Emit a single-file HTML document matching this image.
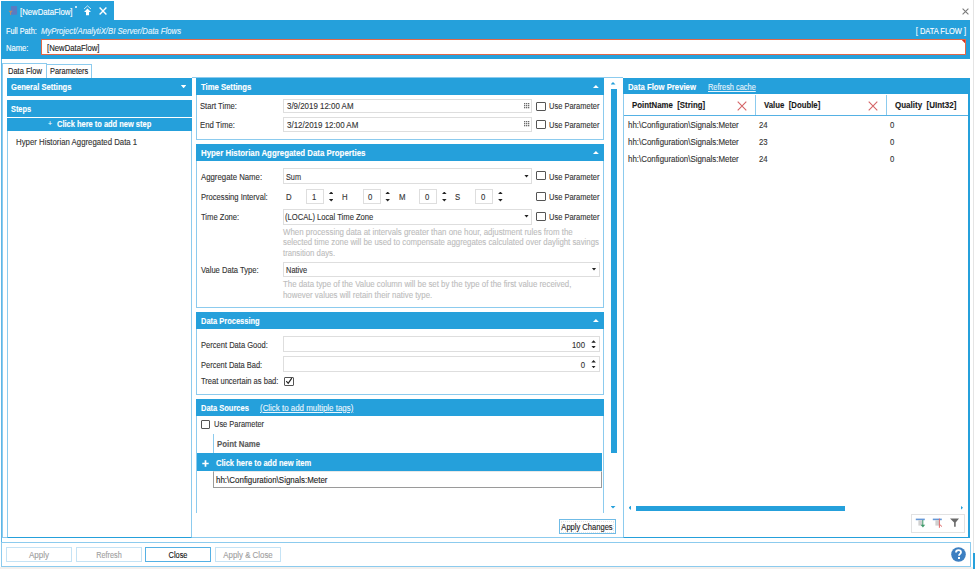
<!DOCTYPE html>
<html><head><meta charset="utf-8">
<style>
html,body{margin:0;padding:0;}
body{width:975px;height:569px;overflow:hidden;position:relative;background:#fff;font-family:"Liberation Sans",sans-serif;}
.a{position:absolute;box-sizing:border-box;}
.t{position:absolute;white-space:pre;font-size:8.5px;line-height:10px;color:#333;-webkit-text-stroke:0.12px currentColor;}
</style></head><body>
<div class="a" style="left:1px;top:1px;width:113px;height:20px;background:#25a0db"></div>
<div class="a" style="left:1px;top:20px;width:969px;height:39px;background:#25a0db"></div>
<svg class="a" style="left:8px;top:5px" width="11" height="11" viewBox="0 0 11 11"><rect x="2.9" y="1.1" width="6.2" height="8.6" rx="0.8" fill="#6673bd" opacity=".8"/><path d="M0.4 5.7H4.8L3.1 7.8V10H2.1V7.8Z" fill="#c8875a" opacity=".85"/></svg>
<div class="t" style="left:19.7px;top:6.50px;color:#fff;transform:scaleX(0.9108159392789373);transform-origin:0 0;">[NewDataFlow]</div>
<div class="a" style="left:75px;top:5.5px;width:2.2px;height:2.2px;border-radius:50%;background:#fff;"></div>
<svg class="a" style="left:83px;top:5px" width="9" height="11" viewBox="0 0 9 11"><path d="M1 4L4.5 0.9L8 4" stroke="#fff" stroke-width="0.9" fill="none" opacity="0.85"/><path d="M4.5 3.4L8 7H6V10.2H3V7H1Z" fill="#fff"/></svg>
<svg class="a" style="left:99px;top:6.5px" width="8" height="8" viewBox="0 0 8 8"><path d="M0.6 0.6L7.4 7.4M7.4 0.6L0.6 7.4" stroke="#fff" stroke-width="1.4"/></svg>
<svg class="a" style="left:962px;top:7.5px" width="7" height="7" viewBox="0 0 7 7"><path d="M0.6 0.6L6.4 6.4M6.4 0.6L0.6 6.4" stroke="#7a7a7a" stroke-width="1.1"/></svg>
<div class="a" style="left:973px;top:0px;width:1px;height:569px;background:#e4e4e4"></div>
<div class="a" style="left:973px;top:553px;width:2px;height:16px;background:#25a0db"></div>
<div class="a" style="left:0px;top:567px;width:973px;height:2px;background:#f2f0ee"></div>
<div class="t" style="left:6.2px;top:25.70px;color:#fff;transform:scaleX(0.8550043516100957);transform-origin:0 0;">Full Path:</div>
<div class="t" style="left:41.4px;top:25.70px;color:#e6f4fc;font-style:italic;transform:scaleX(0.9090909090909091);transform-origin:0 0;">MyProject/AnalytiX/BI Server/Data Flows</div>
<div class="t" style="left:966px;top:25.70px;color:#fff;transform:translateX(-100%) scaleX(0.8758996728462378);transform-origin:100% 0;">[ DATA FLOW ]</div>
<div class="t" style="left:6.2px;top:43.00px;color:#fff;transform:scaleX(0.8983156581409857);transform-origin:0 0;">Name:</div>
<div class="a" style="left:41px;top:39px;width:925px;height:16.3px;background:#fff;border:1px solid #e26848"></div>
<div class="a" style="left:961.8px;top:40px;width:3.4px;height:3.4px;background:#d8301c;clip-path:polygon(0 0,100% 0,100% 100%)"></div>
<div class="t" style="left:46.8px;top:43.00px;color:#222;transform:scaleX(0.9108159392789373);transform-origin:0 0;">[NewDataFlow]</div>
<div class="a" style="left:1px;top:59px;width:1px;height:508px;background:#5db6e6"></div>
<div class="a" style="left:46px;top:64px;width:46px;height:14px;border:1px solid #8ccbee;border-bottom:none;background:#fff"></div>
<div class="a" style="left:2px;top:63px;width:45px;height:15px;border:1px solid #8ccbee;border-bottom:none;background:#fff"></div>
<div class="t" style="left:7.7px;top:65.50px;color:#222;transform:scaleX(0.883299305839118);transform-origin:0 0;">Data Flow</div>
<div class="t" style="left:49.7px;top:66.20px;color:#222;transform:scaleX(0.8716927453769558);transform-origin:0 0;">Parameters</div>
<div class="a" style="left:2px;top:77px;width:968px;height:461px;border:1px solid #8ccbee;border-top:none;border-right:none"></div>
<div class="a" style="left:7px;top:78px;width:185px;height:18px;background:#25a0db"></div>
<div class="t" style="left:11.3px;top:82.20px;color:#fff;font-weight:bold;transform:scaleX(0.8954671600370028);transform-origin:0 0;">General Settings</div>
<div class="a" style="left:180.8px;top:85.1px;width:5.6px;height:3.2px;background:#fff;clip-path:polygon(0 0,100% 0,50% 100%)"></div>
<div class="a" style="left:7px;top:100px;width:185px;height:17px;background:#25a0db"></div>
<div class="t" style="left:11.1px;top:103.60px;color:#fff;font-weight:bold;transform:scaleX(0.863697705802969);transform-origin:0 0;">Steps</div>
<div class="a" style="left:7px;top:118px;width:185px;height:13px;background:#25a0db"></div>
<div class="t" style="left:48px;top:119.44px;color:#fff;font-size:7.5px;transform:scaleX(0.912);transform-origin:0 0;">+</div>
<div class="t" style="left:57px;top:119.00px;color:#fff;font-weight:bold;transform:scaleX(0.878449657584147);transform-origin:0 0;">Click here to add new step</div>
<div class="a" style="left:7px;top:131px;width:185px;height:407px;border:1px solid #8ccbee;border-top:none;border-bottom:1px solid #25a0db"></div>
<div class="t" style="left:16.2px;top:136.60px;color:#333;transform:scaleX(0.9193789261585872);transform-origin:0 0;">Hyper Historian Aggregated Data 1</div>
<div class="a" style="left:192px;top:77px;width:431px;height:1px;background:#8ccbee"></div>
<div class="a" style="left:196px;top:78px;width:408px;height:17px;background:#25a0db"></div>
<div class="t" style="left:200.6px;top:81.60px;color:#fff;font-weight:bold;transform:scaleX(0.9050323306156873);transform-origin:0 0;">Time Settings</div>
<div class="a" style="left:593px;top:84.9px;width:5.8px;height:3.2px;background:#fff;clip-path:polygon(50% 0,100% 100%,0 100%)"></div>
<div class="a" style="left:196px;top:95px;width:408px;height:45px;border:1px solid #8ccbee;border-top:none"></div>
<div class="t" style="left:200px;top:101.20px;color:#333;transform:scaleX(0.8979467680608365);transform-origin:0 0;">Start Time:</div>
<div class="t" style="left:200px;top:119.80px;color:#333;transform:scaleX(0.912);transform-origin:0 0;">End Time:</div>
<div class="a" style="left:283px;top:98.5px;width:249px;height:14.5px;border:1px solid #dedede;background:#fff;"></div>
<div class="a" style="left:283px;top:117px;width:249px;height:14.5px;border:1px solid #dedede;background:#fff;"></div>
<div class="t" style="left:286.7px;top:101.20px;color:#333;transform:scaleX(0.9316987740805605);transform-origin:0 0;">3/9/2019 12:00 AM</div>
<div class="t" style="left:286.7px;top:119.80px;color:#333;transform:scaleX(0.9370020533880903);transform-origin:0 0;">3/12/2019 12:00 AM</div>
<svg class="a" style="left:524px;top:103px" width="6" height="6" viewBox="0 0 6 6" fill="#6a6a6a"><rect x="0" y="0" width="1.3" height="1.3"/><rect x="0" y="2" width="1.3" height="1.3"/><rect x="0" y="4" width="1.3" height="1.3"/><rect x="2" y="0" width="1.3" height="1.3"/><rect x="2" y="2" width="1.3" height="1.3"/><rect x="2" y="4" width="1.3" height="1.3"/><rect x="4" y="0" width="1.3" height="1.3"/><rect x="4" y="2" width="1.3" height="1.3"/><rect x="4" y="4" width="1.3" height="1.3"/></svg>
<svg class="a" style="left:524px;top:121px" width="6" height="6" viewBox="0 0 6 6" fill="#6a6a6a"><rect x="0" y="0" width="1.3" height="1.3"/><rect x="0" y="2" width="1.3" height="1.3"/><rect x="0" y="4" width="1.3" height="1.3"/><rect x="2" y="0" width="1.3" height="1.3"/><rect x="2" y="2" width="1.3" height="1.3"/><rect x="2" y="4" width="1.3" height="1.3"/><rect x="4" y="0" width="1.3" height="1.3"/><rect x="4" y="2" width="1.3" height="1.3"/><rect x="4" y="4" width="1.3" height="1.3"/></svg>
<div class="a" style="left:536px;top:102px;width:9.5px;height:9px;border:1px solid #555;border-radius:1px;background:#fff;"></div>
<div class="t" style="left:548.8px;top:101.20px;color:#333;transform:scaleX(0.8815523367040174);transform-origin:0 0;">Use Parameter</div>
<div class="a" style="left:536px;top:120px;width:9.5px;height:9px;border:1px solid #555;border-radius:1px;background:#fff;"></div>
<div class="t" style="left:548.8px;top:119.90px;color:#333;transform:scaleX(0.8815523367040174);transform-origin:0 0;">Use Parameter</div>
<div class="a" style="left:196px;top:144px;width:408px;height:17px;background:#25a0db"></div>
<div class="t" style="left:200.6px;top:147.60px;color:#fff;font-weight:bold;transform:scaleX(0.9248132196536873);transform-origin:0 0;">Hyper Historian Aggregated Data Properties</div>
<div class="a" style="left:593px;top:150.9px;width:5.8px;height:3.2px;background:#fff;clip-path:polygon(50% 0,100% 100%,0 100%)"></div>
<div class="a" style="left:196px;top:161px;width:408px;height:147px;border:1px solid #8ccbee;border-top:none"></div>
<div class="t" style="left:200.6px;top:171.80px;color:#333;transform:scaleX(0.9170731707317074);transform-origin:0 0;">Aggregate Name:</div>
<div class="a" style="left:283px;top:168.3px;width:249px;height:15.3px;border:1px solid #dedede;background:#fff;"></div>
<div class="t" style="left:286.3px;top:171.80px;color:#333;transform:scaleX(0.8579088471849866);transform-origin:0 0;">Sum</div>
<div class="a" style="left:524px;top:174.5px;width:5px;height:3px;background:#222;clip-path:polygon(0 0,100% 0,50% 100%)"></div>
<div class="a" style="left:536px;top:171.3px;width:9.5px;height:9px;border:1px solid #555;border-radius:1px;background:#fff;"></div>
<div class="t" style="left:548.8px;top:171.80px;color:#333;transform:scaleX(0.8815523367040174);transform-origin:0 0;">Use Parameter</div>
<div class="t" style="left:200.6px;top:191.60px;color:#333;transform:scaleX(0.8934282126412726);transform-origin:0 0;">Processing Interval:</div>
<div class="t" style="left:286px;top:191.60px;color:#333;transform:scaleX(0.912);transform-origin:0 0;">D</div>
<div class="a" style="left:306.2px;top:188.5px;width:18px;height:15.5px;border:1px solid #dedede;background:#fff;"></div>
<div class="t" style="left:311.8px;top:191.60px;color:#333;transform:scaleX(0.912);transform-origin:0 0;">1</div>
<div class="a" style="left:328.95px;top:191.5px;width:4.5px;height:2.5px;background:#222;clip-path:polygon(50% 0,100% 100%,0 100%)"></div>
<div class="a" style="left:328.95px;top:199px;width:4.5px;height:2.5px;background:#222;clip-path:polygon(0 0,100% 0,50% 100%)"></div>
<div class="t" style="left:342px;top:191.60px;color:#333;transform:scaleX(0.912);transform-origin:0 0;">H</div>
<div class="a" style="left:362.5px;top:188.5px;width:18px;height:15.5px;border:1px solid #dedede;background:#fff;"></div>
<div class="t" style="left:368.1px;top:191.60px;color:#333;transform:scaleX(0.912);transform-origin:0 0;">0</div>
<div class="a" style="left:385.45px;top:191.5px;width:4.5px;height:2.5px;background:#222;clip-path:polygon(50% 0,100% 100%,0 100%)"></div>
<div class="a" style="left:385.45px;top:199px;width:4.5px;height:2.5px;background:#222;clip-path:polygon(0 0,100% 0,50% 100%)"></div>
<div class="t" style="left:398.8px;top:191.60px;color:#333;transform:scaleX(0.912);transform-origin:0 0;">M</div>
<div class="a" style="left:419px;top:188.5px;width:18px;height:15.5px;border:1px solid #dedede;background:#fff;"></div>
<div class="t" style="left:424.6px;top:191.60px;color:#333;transform:scaleX(0.912);transform-origin:0 0;">0</div>
<div class="a" style="left:442.05px;top:191.5px;width:4.5px;height:2.5px;background:#222;clip-path:polygon(50% 0,100% 100%,0 100%)"></div>
<div class="a" style="left:442.05px;top:199px;width:4.5px;height:2.5px;background:#222;clip-path:polygon(0 0,100% 0,50% 100%)"></div>
<div class="t" style="left:454.7px;top:191.60px;color:#333;transform:scaleX(0.912);transform-origin:0 0;">S</div>
<div class="a" style="left:475.2px;top:188.5px;width:18px;height:15.5px;border:1px solid #dedede;background:#fff;"></div>
<div class="t" style="left:480.8px;top:191.60px;color:#333;transform:scaleX(0.912);transform-origin:0 0;">0</div>
<div class="a" style="left:498.15px;top:191.5px;width:4.5px;height:2.5px;background:#222;clip-path:polygon(50% 0,100% 100%,0 100%)"></div>
<div class="a" style="left:498.15px;top:199px;width:4.5px;height:2.5px;background:#222;clip-path:polygon(0 0,100% 0,50% 100%)"></div>
<div class="a" style="left:536px;top:192px;width:9.5px;height:9px;border:1px solid #555;border-radius:1px;background:#fff;"></div>
<div class="t" style="left:548.8px;top:191.60px;color:#333;transform:scaleX(0.8815523367040174);transform-origin:0 0;">Use Parameter</div>
<div class="t" style="left:200.6px;top:212.10px;color:#333;transform:scaleX(0.8952032222629074);transform-origin:0 0;">Time Zone:</div>
<div class="a" style="left:283px;top:209px;width:249px;height:15.5px;border:1px solid #dedede;background:#fff;"></div>
<div class="t" style="left:285px;top:212.10px;color:#333;transform:scaleX(0.894318721316664);transform-origin:0 0;">(LOCAL) Local Time Zone</div>
<div class="a" style="left:524px;top:214.5px;width:5px;height:3px;background:#222;clip-path:polygon(0 0,100% 0,50% 100%)"></div>
<div class="a" style="left:536px;top:212px;width:9.5px;height:9px;border:1px solid #555;border-radius:1px;background:#fff;"></div>
<div class="t" style="left:548.8px;top:212.10px;color:#333;transform:scaleX(0.8815523367040174);transform-origin:0 0;">Use Parameter</div>
<div class="t" style="left:282.9px;top:227.00px;color:#bdbdbd;transform:scaleX(0.9275501525839212);transform-origin:0 0;">When processing data at intervals greater than one hour, adjustment rules from the</div>
<div class="t" style="left:282.9px;top:237.30px;color:#bdbdbd;transform:scaleX(0.9211569118651788);transform-origin:0 0;">selected time zone will be used to compensate aggregates calculated over daylight savings</div>
<div class="t" style="left:282.9px;top:247.60px;color:#bdbdbd;transform:scaleX(0.9112872369499864);transform-origin:0 0;">transition days.</div>
<div class="t" style="left:200.6px;top:264.90px;color:#333;transform:scaleX(0.8923375363724539);transform-origin:0 0;">Value Data Type:</div>
<div class="a" style="left:283px;top:261.5px;width:317px;height:15.5px;border:1px solid #dedede;background:#fff;"></div>
<div class="t" style="left:286.3px;top:264.90px;color:#333;transform:scaleX(0.8757457846952011);transform-origin:0 0;">Native</div>
<div class="a" style="left:591.5px;top:267.5px;width:5px;height:3px;background:#222;clip-path:polygon(0 0,100% 0,50% 100%)"></div>
<div class="t" style="left:282.9px;top:279.30px;color:#bdbdbd;transform:scaleX(0.9252857429316221);transform-origin:0 0;">The data type of the Value column will be set by the type of the first value received,</div>
<div class="t" style="left:282.9px;top:289.60px;color:#bdbdbd;transform:scaleX(0.9233030361632178);transform-origin:0 0;">however values will retain their native type.</div>
<div class="a" style="left:196px;top:312px;width:408px;height:17px;background:#25a0db"></div>
<div class="t" style="left:200.6px;top:315.60px;color:#fff;font-weight:bold;transform:scaleX(0.8795497185741088);transform-origin:0 0;">Data Processing</div>
<div class="a" style="left:593px;top:318.9px;width:5.8px;height:3.2px;background:#fff;clip-path:polygon(50% 0,100% 100%,0 100%)"></div>
<div class="a" style="left:196px;top:329px;width:408px;height:66px;border:1px solid #8ccbee;border-top:none"></div>
<div class="t" style="left:200.5px;top:339.80px;color:#333;transform:scaleX(0.8889997920565605);transform-origin:0 0;">Percent Data Good:</div>
<div class="a" style="left:283px;top:336.2px;width:317px;height:15.5px;border:1px solid #dedede;background:#fff;"></div>
<div class="t" style="left:585.4px;top:339.80px;color:#333;transform:translateX(-100%) scaleX(0.912);transform-origin:100% 0;">100</div>
<div class="t" style="left:200.5px;top:359.70px;color:#333;transform:scaleX(0.8809716599190284);transform-origin:0 0;">Percent Data Bad:</div>
<div class="a" style="left:283px;top:356px;width:317px;height:15.5px;border:1px solid #dedede;background:#fff;"></div>
<div class="t" style="left:585.4px;top:359.70px;color:#333;transform:translateX(-100%) scaleX(0.912);transform-origin:100% 0;">0</div>
<div class="a" style="left:591.3px;top:340.2px;width:4.6px;height:2.6px;background:#222;clip-path:polygon(50% 0,100% 100%,0 100%)"></div>
<div class="a" style="left:591.3px;top:345.8px;width:4.6px;height:2.6px;background:#222;clip-path:polygon(0 0,100% 0,50% 100%)"></div>
<div class="a" style="left:591.3px;top:360px;width:4.6px;height:2.6px;background:#222;clip-path:polygon(50% 0,100% 100%,0 100%)"></div>
<div class="a" style="left:591.3px;top:365.6px;width:4.6px;height:2.6px;background:#222;clip-path:polygon(0 0,100% 0,50% 100%)"></div>
<div class="t" style="left:200.5px;top:376.40px;color:#333;transform:scaleX(0.8885381165919283);transform-origin:0 0;">Treat uncertain as bad:</div>
<div class="a" style="left:284px;top:376.5px;width:9.5px;height:9px;border:1px solid #555;border-radius:1px;background:#fff;"></div>
<svg class="a" style="left:285px;top:377px" width="8" height="8" viewBox="0 0 8 8"><path d="M1.3 4.2L3.2 6.3L6.8 1.2" stroke="#222" stroke-width="1.2" fill="none"/></svg>
<div class="a" style="left:196px;top:399px;width:408px;height:17px;background:#25a0db"></div>
<div class="t" style="left:200.6px;top:402.60px;color:#fff;font-weight:bold;transform:scaleX(0.879585968947671);transform-origin:0 0;">Data Sources</div>
<div class="t" style="left:260px;top:402.80px;color:#eaf6fd;text-decoration:underline;transform:scaleX(0.9315444617784711);transform-origin:0 0;">(Click to add multiple tags)</div>
<div class="a" style="left:196px;top:416px;width:1px;height:97px;background:#8ccbee"></div>
<div class="a" style="left:602.5px;top:416px;width:1.5px;height:97px;background:#8ccbee"></div>
<div class="a" style="left:201px;top:420.3px;width:9px;height:8.5px;border:1px solid #555;border-radius:1px;background:#fff;"></div>
<div class="t" style="left:213.7px;top:419.00px;color:#333;transform:scaleX(0.8763050013664936);transform-origin:0 0;">Use Parameter</div>
<div class="a" style="left:212.5px;top:434px;width:1px;height:19px;background:#8ccbee"></div>
<div class="t" style="left:216.7px;top:438.80px;color:#5a5a5a;font-weight:bold;transform:scaleX(0.9237554293351153);transform-origin:0 0;">Point Name</div>
<div class="a" style="left:196.6px;top:453px;width:405.6px;height:18px;background:#25a0db"></div>
<svg class="a" style="left:201.6px;top:459.5px" width="7" height="7" viewBox="0 0 7 7"><path d="M3.5 0.3V6.7M0.3 3.5H6.7" stroke="#fff" stroke-width="1.7"/></svg>
<div class="t" style="left:216.1px;top:457.70px;color:#fff;font-weight:bold;transform:scaleX(0.887775025499053);transform-origin:0 0;">Click here to add new item</div>
<div class="a" style="left:212.8px;top:471px;width:389.4px;height:17px;border:1px solid #9a9a9a;border-top:1px solid #e8e8e8;background:#fff"></div>
<div class="t" style="left:216.4px;top:474.90px;color:#222;transform:scaleX(0.9363600577352054);transform-origin:0 0;">hh:\Configuration\Signals:Meter</div>
<div class="a" style="left:610.5px;top:82px;width:5px;height:2.5px;background:#25a0db;clip-path:polygon(50% 0,100% 100%,0 100%)"></div>
<div class="a" style="left:611px;top:89px;width:5.5px;height:364px;background:#25a0db"></div>
<div class="a" style="left:610.5px;top:506px;width:5px;height:2.5px;background:#25a0db;clip-path:polygon(0 0,100% 0,50% 100%)"></div>
<div class="a" style="left:559px;top:519px;width:56.5px;height:15px;border:1px solid #6fbbe6;background:#fff"></div>
<div class="a" style="left:560.5px;top:520.5px;width:53.5px;height:12px;border:1px dotted #e6e6e6"></div>
<div class="t" style="left:587.4px;top:521.80px;color:#222;transform:translateX(-50%) scaleX(0.8897560975609755);transform-origin:50% 0;">Apply Changes</div>
<div class="a" style="left:623px;top:78px;width:347px;height:16px;background:#25a0db"></div>
<div class="t" style="left:627.9px;top:82.00px;color:#fff;font-weight:bold;transform:scaleX(0.9096922754867072);transform-origin:0 0;">Data Flow Preview</div>
<div class="t" style="left:707.9px;top:82.00px;color:#e6f4fc;text-decoration:underline;transform:scaleX(0.8720638540478904);transform-origin:0 0;">Refresh cache</div>
<div class="a" style="left:623px;top:94px;width:347px;height:444px;border-left:1px solid #8ccbee;border-right:2px solid #25a0db;border-bottom:1px solid #25a0db"></div>
<div class="a" style="left:624px;top:115px;width:344px;height:1px;background:#55b1e4"></div>
<div class="a" style="left:755px;top:95px;width:1px;height:20px;background:#8ccbee"></div>
<div class="a" style="left:886px;top:95px;width:1px;height:20px;background:#8ccbee"></div>
<div class="t" style="left:632.4px;top:100.30px;color:#1a1a1a;font-weight:bold;transform:scaleX(0.921307601417881);transform-origin:0 0;">PointName  [String]</div>
<div class="t" style="left:763.9px;top:100.30px;color:#1a1a1a;font-weight:bold;transform:scaleX(0.9168447837150127);transform-origin:0 0;">Value  [Double]</div>
<div class="t" style="left:895.1px;top:100.30px;color:#1a1a1a;font-weight:bold;transform:scaleX(0.9403643336529243);transform-origin:0 0;">Quality  [UInt32]</div>
<svg class="a" style="left:736.5px;top:100.5px" width="10" height="10" viewBox="0 0 10 10"><path d="M0.7 0.7L9.3 9.3M9.3 0.7L0.7 9.3" stroke="#d46466" stroke-width="1.1"/></svg>
<svg class="a" style="left:867.5px;top:100.5px" width="10" height="10" viewBox="0 0 10 10"><path d="M0.7 0.7L9.3 9.3M9.3 0.7L0.7 9.3" stroke="#d46466" stroke-width="1.1"/></svg>
<div class="t" style="left:627.8px;top:119.70px;color:#333;transform:scaleX(0.9296417792940559);transform-origin:0 0;">hh:\Configuration\Signals:Meter</div>
<div class="t" style="left:759px;top:119.70px;color:#333;transform:scaleX(0.912);transform-origin:0 0;">24</div>
<div class="t" style="left:890px;top:119.70px;color:#333;transform:scaleX(0.912);transform-origin:0 0;">0</div>
<div class="t" style="left:627.8px;top:136.60px;color:#333;transform:scaleX(0.9296417792940559);transform-origin:0 0;">hh:\Configuration\Signals:Meter</div>
<div class="t" style="left:759px;top:136.60px;color:#333;transform:scaleX(0.912);transform-origin:0 0;">23</div>
<div class="t" style="left:890px;top:136.60px;color:#333;transform:scaleX(0.912);transform-origin:0 0;">0</div>
<div class="t" style="left:627.8px;top:153.70px;color:#333;transform:scaleX(0.9296417792940559);transform-origin:0 0;">hh:\Configuration\Signals:Meter</div>
<div class="t" style="left:759px;top:153.70px;color:#333;transform:scaleX(0.912);transform-origin:0 0;">24</div>
<div class="t" style="left:890px;top:153.70px;color:#333;transform:scaleX(0.912);transform-origin:0 0;">0</div>
<div class="a" style="left:628.5px;top:505.5px;width:2.5px;height:4.5px;background:#25a0db;clip-path:polygon(100% 0,100% 100%,0 50%)"></div>
<div class="a" style="left:635.5px;top:505.5px;width:209.5px;height:5.5px;background:#25a0db"></div>
<div class="a" style="left:960.5px;top:505.5px;width:2.5px;height:4.5px;background:#25a0db;clip-path:polygon(0 0,100% 50%,0 100%)"></div>
<div class="a" style="left:911px;top:513.5px;width:53.5px;height:19px;border:1px solid #e2e2e2;background:#fff"></div>
<svg class="a" style="left:910px;top:513px" width="55" height="20" viewBox="0 0 55 20">
<rect x="5.8" y="5.6" width="9" height="1.6" fill="#4a86d0" opacity=".85"/>
<rect x="8.4" y="7.2" width="4" height="5.4" fill="#d0d0d0"/>
<path d="M12.8 7V12.6" stroke="#3f9a6a" stroke-width="1"/>
<path d="M10.6 11.8H15.2L12.9 14.6Z" fill="#3f9a6a"/>
<rect x="22.8" y="5.6" width="9" height="1.6" fill="#4a86d0" opacity=".85"/>
<rect x="25.4" y="7.2" width="3.6" height="5.4" fill="#d0d0d0"/>
<path d="M29.4 5.6V14.8M29.4 11.2L32 13.6" stroke="#e06a6a" stroke-width="1" fill="none"/>
<path d="M40 5.6H49L45.7 9.6V13.8H44.1V9.6Z" fill="#6a6a6a"/>
</svg>
<div class="a" style="left:1px;top:542px;width:970px;height:25px;border:1px solid #8ccbee"></div>
<div class="a" style="left:6px;top:547px;width:65.5px;height:14.5px;border:1px solid #c5e3f5"></div>
<div class="t" style="left:38.75px;top:549.50px;color:#a0a0a0;transform:translateX(-50%) scaleX(0.9451873622336517);transform-origin:50% 0;">Apply</div>
<div class="a" style="left:75.5px;top:547px;width:66px;height:14.5px;border:1px solid #c5e3f5"></div>
<div class="t" style="left:108.5px;top:549.50px;color:#a0a0a0;transform:translateX(-50%) scaleX(0.8533333333333333);transform-origin:50% 0;">Refresh</div>
<div class="a" style="left:145px;top:547px;width:65.5px;height:14.5px;border:1px solid #55b1e4"></div>
<div class="t" style="left:177.75px;top:549.50px;color:#111;transform:translateX(-50%) scaleX(0.8695902228612509);transform-origin:50% 0;">Close</div>
<div class="a" style="left:215px;top:547px;width:65.5px;height:14.5px;border:1px solid #c5e3f5"></div>
<div class="t" style="left:247.75px;top:549.50px;color:#a0a0a0;transform:translateX(-50%) scaleX(0.9271290605794557);transform-origin:50% 0;">Apply &amp; Close</div>
<svg class="a" style="left:950.5px;top:547px" width="15" height="15" viewBox="0 0 15 15"><circle cx="7.5" cy="7.5" r="7.3" fill="#3d7fc1"/><path d="M5 5.6C5 4 6.1 3.2 7.5 3.2C9 3.2 10 4.1 10 5.3C10 6.9 8 7 8 8.8" stroke="#fff" stroke-width="1.8" fill="none"/><rect x="7" y="10" width="2" height="2" fill="#fff"/></svg>
</body></html>
